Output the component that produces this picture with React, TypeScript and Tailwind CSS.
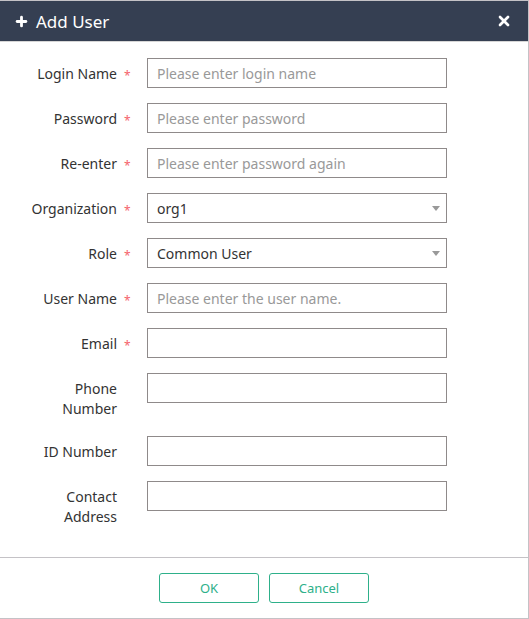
import { Plus, X } from 'lucide-react';

type Field = {
  label: string[];
  required?: boolean;
  placeholder?: string;
  value?: string;
  select?: boolean;
};

const fields: Field[] = [
  { label: ['Login Name'], required: true, placeholder: 'Please enter login name' },
  { label: ['Password'], required: true, placeholder: 'Please enter password' },
  { label: ['Re-enter'], required: true, placeholder: 'Please enter password again' },
  { label: ['Organization'], required: true, value: 'org1', select: true },
  { label: ['Role'], required: true, value: 'Common User', select: true },
  { label: ['User Name'], required: true, placeholder: 'Please enter the user name.' },
  { label: ['Email'], required: true },
  { label: ['Phone', 'Number'] },
  { label: ['ID Number'] },
  { label: ['Contact', 'Address'] },
];

function FormRow({ field }: { field: Field }) {
  return (
    <div className="flex items-start">
      <div className="w-[92px] pt-[6px] pb-[2px] text-right text-[14px] leading-[20px] text-[#333]">
        {field.label.map((line) => (
          <div key={line}>{line}</div>
        ))}
      </div>
      <div className="w-[30px] pt-[8px] pl-[7px] text-[12px] leading-[20px] text-[#f5626b]">
        {field.required ? '*' : ''}
      </div>
      <div className="relative flex h-[30px] w-[300px] items-center border border-[#8f8a8a] px-[9px] pt-[1px] text-[14px]">
        {field.value ? (
          <span className="text-[#333]">{field.value}</span>
        ) : (
          <span className="text-[#999]">{field.placeholder ?? ''}</span>
        )}
        {field.select ? (
          <span className="absolute right-[6px] top-[12px] h-0 w-0 border-x-[4px] border-t-[5px] border-x-transparent border-t-[#999]" />
        ) : null}
      </div>
    </div>
  );
}

export default function App() {
  return (
    <div
      className="flex h-[619px] w-[529px] flex-col border-t border-r border-b border-[#c4c2c6] bg-white"
      style={{ fontFamily: '"Noto Sans", "Open Sans", sans-serif' }}
    >
      <header className="flex h-[41px] items-center justify-between border-b border-[#d6d6d6] bg-[#353f52] pl-[14px] pr-[16px] text-white">
        <div className="flex items-center gap-[7px]">
          <Plus size={15} strokeWidth={4.5} />
          <span className="text-[17px] leading-none">Add User</span>
        </div>
        <X size={16} strokeWidth={4} />
      </header>
      <main className="flex flex-1 flex-col gap-[15px] pt-[16px] pl-[25px]">
        {fields.map((field) => (
          <FormRow key={field.label.join(' ')} field={field} />
        ))}
      </main>
      <footer className="flex justify-center gap-[10px] border-t border-[#c4c2c6] py-[15px]">
        <button className="h-[30px] w-[100px] rounded-[3px] border border-[#2eb08a] pt-[1px] text-[13px] text-[#2eb08a]">
          OK
        </button>
        <button className="h-[30px] w-[100px] rounded-[3px] border border-[#2eb08a] pt-[1px] text-[13px] text-[#2eb08a]">
          Cancel
        </button>
      </footer>
    </div>
  );
}
